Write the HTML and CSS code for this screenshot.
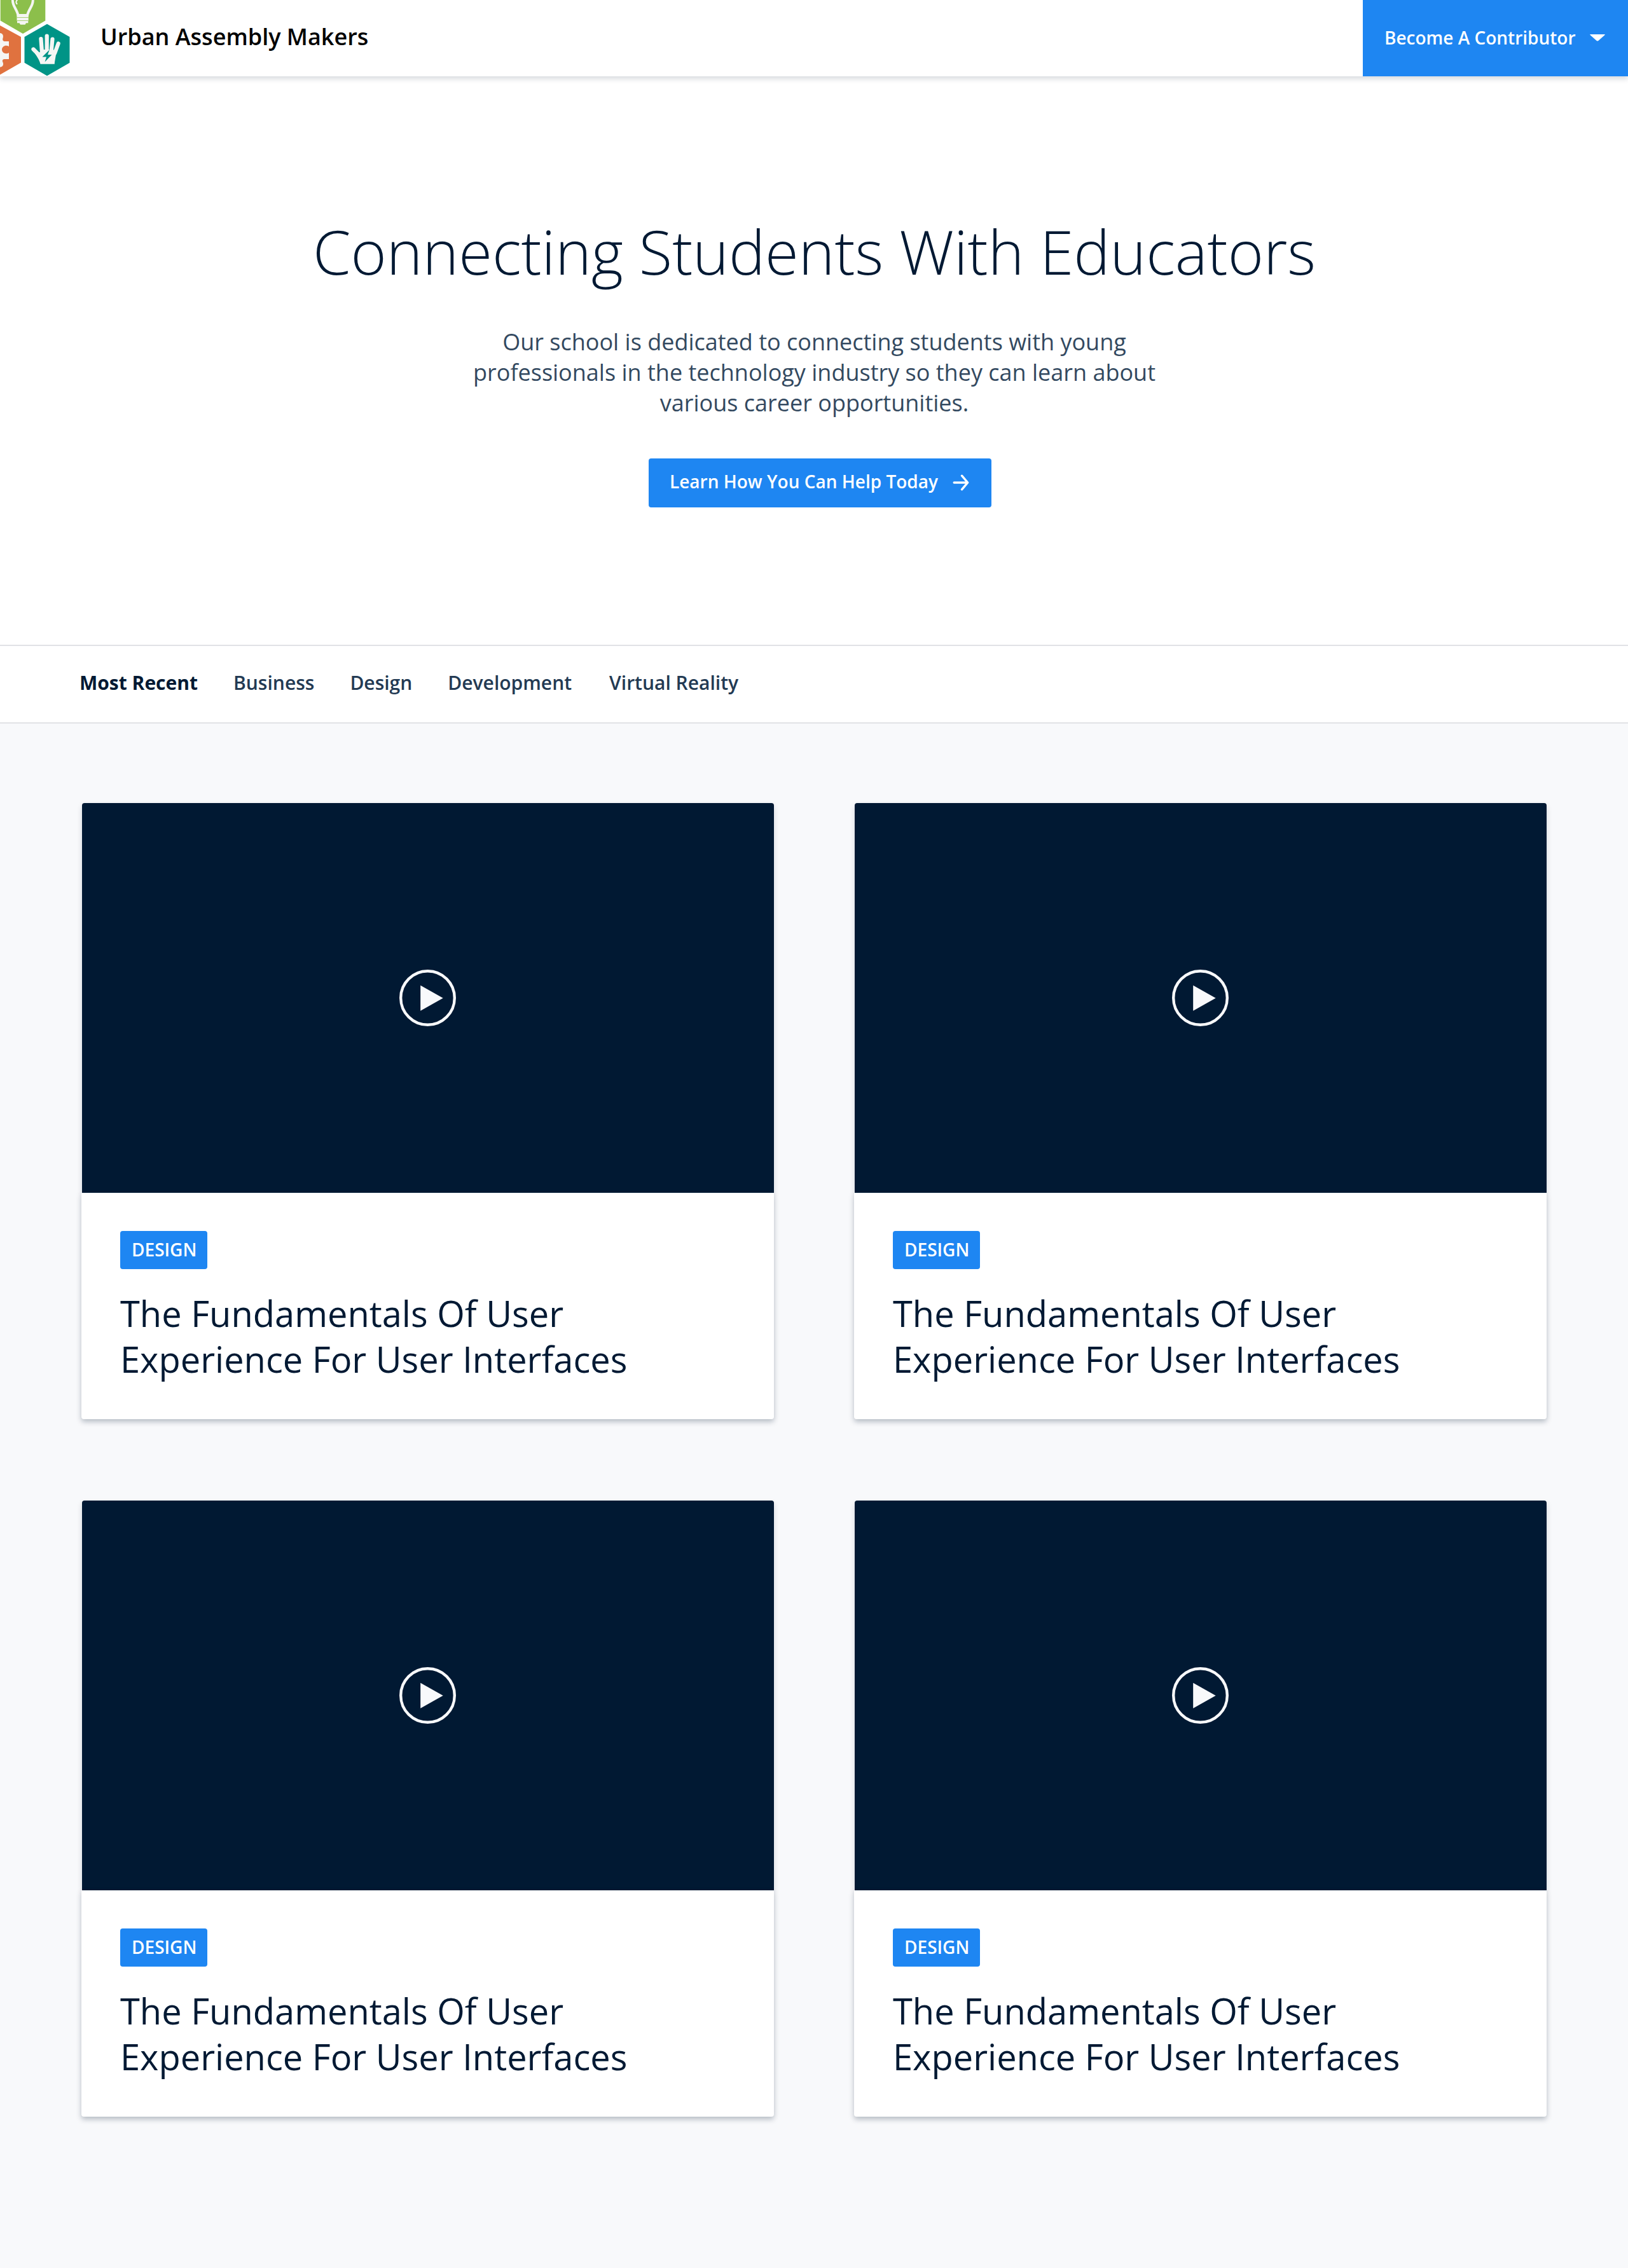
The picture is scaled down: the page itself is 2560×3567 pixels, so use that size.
FILE: index.html
```html
<!DOCTYPE html>
<html lang="en">
<head>
<meta charset="utf-8">
<title>Urban Assembly Makers</title>
<link rel="stylesheet" href="styles.css">
</head>
<body>
<svg class="symbols" aria-hidden="true">
  <symbol id="play" viewBox="0 0 90 90">
    <circle cx="44.500" cy="44.500" r="42.300" fill="none" stroke="#f8f9fb" stroke-width="4.400"/>
    <path d="M33.200 24.800v40L68.700 44.800z" fill="#f8f9fb"/>
  </symbol>
</svg>

<header class="header">
  <svg class="logo" viewBox="0 0 110 120" role="img" aria-label="Urban Assembly Makers logo">
    <path d="M0.7 0H71.3V32.5L36 53L0.7 32.5z" fill="#8cbf4b"/>
    <path d="M20 0C19.2 9 26.500 14 28.500 24H43C45 14 52.500 9 51.700 0" fill="none" stroke="#f5f6f4" stroke-width="4"/>
    <path d="M27 0Q24 3 26.500 6" fill="none" stroke="#f5f6f4" stroke-width="2" stroke-linecap="round"/>
    <path d="M26.500 23.300h18.200v9.400h-18.200z" fill="#f5f6f4"/>
    <path d="M26.500 27.500h18.200M26.500 32.500h18.200" stroke="#a8cd75" stroke-width="1"/>
    <path d="M27 33h17.300v3.300h-3.300l-1.500 2.400h-7.500l-1.500-2.400h-3.500z" fill="#f5f6f4"/>
    <path d="M0 40L33 58V98.500L0 117.500z" fill="#e0723f"/>
    <path d="M0 52C4 52 6 56 4.500 60C3.500 63 5 65 8 65H14V73C9 70 3 73 3 78C3 83 9 86 14 83V93H8C4 93 3 95 4.500 98C6.500 103 3 105.500 0 105.500z" fill="#f5f6f4"/>
    <path d="M74 37.700L109.500 58V98.800L74 119.200L38.500 98.800V58z" fill="#009486"/>
    <g fill="none" stroke="#f5f6f4" stroke-linecap="round" stroke-width="6.200">
      <path d="M64.400 61L66 82"/>
      <path d="M73.700 56.500V80"/>
      <path d="M82.500 61.500L80.500 82"/>
      <path d="M91.700 68.500L86 84"/>
      <path d="M52.500 77.500L64 89"/>
    </g>
    <path d="M63 78H83L88.700 80C88 88 86 96 85.800 100.700H63.500C62 94 58 89 55 84L63 82z" fill="#f5f6f4"/>
    <path d="M78 78L66.500 89.500H73L70.500 97.500L81.500 86H75z" fill="#009486"/>
  </svg>
  <h1 class="brand">Urban Assembly Makers</h1>
  <a class="contribute">
    <span class="contribute-label">Become A Contributor</span>
    <svg class="caret" viewBox="0 0 24 11"><path d="M1 0H23Q24.500 0 23.500 1L14 9.500Q12 11.500 10 9.500L.5 1Q-.5 0 1 0z" fill="#fff"/></svg>
  </a>
</header>

<section class="hero">
  <h2 class="hero-title">Connecting Students With Educators</h2>
  <p class="hero-text">Our school is dedicated to connecting students with young professionals in the technology industry so they can learn about various career opportunities.</p>
  <a class="cta">
    <span class="cta-label">Learn How You Can Help Today</span>
    <svg class="arrow" viewBox="0 0 26 26"><path d="M2.200 13H23.500M14.500 2.200L23.700 13L14.500 23.800" fill="none" stroke="#fff" stroke-width="3.400" stroke-linecap="round" stroke-linejoin="round"/></svg>
  </a>
</section>

<nav class="tabs">
  <a class="tab tab-active">Most Recent</a>
  <a class="tab">Business</a>
  <a class="tab">Design</a>
  <a class="tab tab-wide">Development</a>
  <a class="tab">Virtual Reality</a>
</nav>

<main class="cards">
  <article class="card">
    <div class="video"><svg class="play"><use href="#play"/></svg></div>
    <div class="card-body">
      <span class="tag">DESIGN</span>
      <h3 class="card-title">The Fundamentals Of User<br>Experience For User Interfaces</h3>
    </div>
  </article>
  <article class="card">
    <div class="video"><svg class="play"><use href="#play"/></svg></div>
    <div class="card-body">
      <span class="tag">DESIGN</span>
      <h3 class="card-title">The Fundamentals Of User<br>Experience For User Interfaces</h3>
    </div>
  </article>
  <article class="card">
    <div class="video"><svg class="play"><use href="#play"/></svg></div>
    <div class="card-body">
      <span class="tag">DESIGN</span>
      <h3 class="card-title">The Fundamentals Of User<br>Experience For User Interfaces</h3>
    </div>
  </article>
  <article class="card">
    <div class="video"><svg class="play"><use href="#play"/></svg></div>
    <div class="card-body">
      <span class="tag">DESIGN</span>
      <h3 class="card-title">The Fundamentals Of User<br>Experience For User Interfaces</h3>
    </div>
  </article>
</main>
</body>
</html>
```
FILE: styles.css
```css
* { box-sizing: border-box; }

body {
  margin: 0;
  min-height: 3567px;
  background: #f8f9fb;
  color: #011933;
  font-family: "Open Sans", sans-serif;
}

h1, h2, h3, p { margin: 0; }

.symbols { display: none; }

.header {
  position: relative;
  display: flex;
  height: 120px;
  background: #fff;
  box-shadow: 0 4px 8px rgba(1, 25, 51, 0.16);
}

.logo { width: 110px; height: 120px; }

.brand {
  margin-left: 48px;
  color: #000;
  font-size: 36px;
  font-weight: 600;
  line-height: 116px;
}

.contribute {
  display: flex;
  width: 417px;
  margin-left: auto;
  padding-left: 34px;
  background: #1e86f2;
  color: #fff;
}

.contribute-label {
  font-size: 28px;
  font-weight: 600;
  line-height: 118px;
}

.caret {
  width: 24px;
  height: 11px;
  margin: 54px 0 0 22px;
}

.hero {
  display: flex;
  flex-direction: column;
  align-items: center;
  height: 894px;
  padding: 210px 0 0 1px;
  background: #fff;
}

.hero-title {
  font-size: 96px;
  font-weight: 300;
  line-height: 130px;
}

.hero-text {
  width: 1120px;
  margin-top: 54px;
  color: #334960;
  font-size: 36px;
  line-height: 48px;
  text-align: center;
}

.cta {
  display: flex;
  width: 539px;
  height: 77px;
  margin: 63px 0 0 18px;
  padding-left: 33px;
  border-radius: 4px;
  background: #1e86f2;
  color: #fff;
}

.cta-label {
  font-size: 28px;
  font-weight: 600;
  line-height: 72px;
}

.arrow {
  width: 26px;
  height: 26px;
  margin: 25px 0 0 23px;
}

.tabs {
  display: flex;
  height: 124px;
  padding-left: 125px;
  border-top: 2px solid #e1e2e6;
  border-bottom: 2px solid #e1e2e6;
  background: #fff;
}

.tab {
  margin-right: 56px;
  color: #233a53;
  font-size: 30px;
  font-weight: 600;
  line-height: 116px;
}

.tab-active {
  color: #011933;
  font-weight: 700;
}

.tab-wide { margin-right: 59px; }

.cards {
  display: grid;
  grid-template-columns: 1089px 1089px;
  gap: 128px 126px;
  padding: 125px 128px 0;
}

.card {
  height: 969px;
}

.video {
  display: flex;
  justify-content: center;
  height: 613px;
  margin-left: 1px;
  padding-top: 262px;
  border-radius: 4px 4px 0 0;
  background: #011933;
  box-shadow: 0 4px 8px rgba(1, 25, 51, 0.16);
}

.play { width: 90px; height: 90px; }

.card-body {
  position: relative;
  height: 356px;
  padding: 60px 61px 0;
  border-radius: 0 0 4px 4px;
  background: #fff;
  box-shadow: 0 4px 8px rgba(1, 25, 51, 0.28);
}

.tag {
  display: block;
  width: 137px;
  height: 60px;
  padding-left: 18px;
  border-radius: 4px;
  background: #1e86f2;
  color: #fff;
  font-size: 28px;
  font-weight: 600;
  line-height: 58px;
}

.card-title {
  margin-top: 33px;
  font-size: 56px;
  font-weight: 400;
  line-height: 72px;
}
```
